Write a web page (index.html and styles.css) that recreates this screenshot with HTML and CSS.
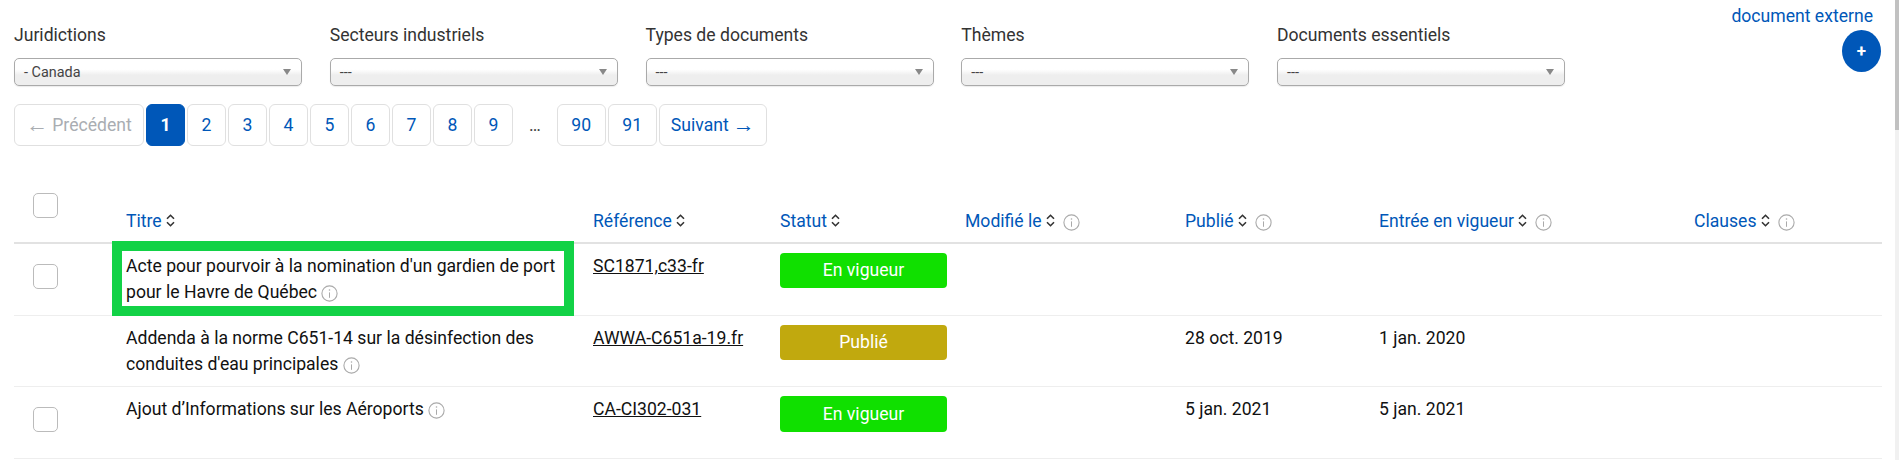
FILE: index.html
```html
<!DOCTYPE html>
<html lang="fr">
<head>
<meta charset="utf-8">
<title>Documents</title>
<link rel="stylesheet" href="styles.css">
</head>
<body>
<svg class="defs" width="0" height="0" aria-hidden="true">
  <symbol id="sort" viewBox="0 0 9 13"><path d="M1 4.8 4.5 1.3 8 4.8M1 8.2 4.5 11.7 8 8.2" fill="none" stroke="#333" stroke-width="1.6"/></symbol>
  <symbol id="info" viewBox="0 0 17 17"><circle cx="8.5" cy="8.5" r="7.6" fill="none" stroke="#aaa" stroke-width="1.1"/><path d="M8.5 7.4v5.4" stroke="#aaa" stroke-width="1"/><circle cx="8.5" cy="5" r=".8" fill="#aaa"/></symbol>
</svg>
<main class="page">
  <div class="top">
    <form class="filters">
      <div class="filter"><label class="filter-label">Juridictions</label><div class="select"><span>- Canada</span><i class="caret"></i></div></div>
      <div class="filter"><label class="filter-label">Secteurs industriels</label><div class="select"><span>---</span><i class="caret"></i></div></div>
      <div class="filter"><label class="filter-label">Types de documents</label><div class="select"><span>---</span><i class="caret"></i></div></div>
      <div class="filter"><label class="filter-label">Thèmes</label><div class="select"><span>---</span><i class="caret"></i></div></div>
      <div class="filter"><label class="filter-label">Documents essentiels</label><div class="select"><span>---</span><i class="caret"></i></div></div>
    </form>
    <div class="external">
      <a class="external-link" href="#">document externe</a>
      <a class="add" href="#">+</a>
    </div>
  </div>
  <nav class="pager">
    <span class="pg prev"><span class="arrow">←</span> Précédent</span>
    <span class="pg current">1</span>
    <a class="pg" href="#">2</a>
    <a class="pg" href="#">3</a>
    <a class="pg" href="#">4</a>
    <a class="pg" href="#">5</a>
    <a class="pg" href="#">6</a>
    <a class="pg" href="#">7</a>
    <a class="pg" href="#">8</a>
    <a class="pg" href="#">9</a>
    <span class="gap">…</span>
    <a class="pg p90" href="#">90</a>
    <a class="pg p91" href="#">91</a>
    <a class="pg next" href="#">Suivant <span class="arrow">→</span></a>
  </nav>
  <table class="docs">
    <colgroup>
      <col class="c-check"><col class="c-title"><col class="c-ref"><col class="c-status"><col class="c-mod"><col class="c-pub"><col class="c-eff"><col class="c-cl">
    </colgroup>
    <thead>
      <tr>
        <th class="check-head"><span class="box"></span></th>
        <th><a href="#">Titre</a><svg class="sort"><use href="#sort"/></svg></th>
        <th><a href="#">Référence</a><svg class="sort"><use href="#sort"/></svg></th>
        <th><a href="#">Statut</a><svg class="sort"><use href="#sort"/></svg></th>
        <th><a href="#">Modifié le</a><svg class="sort"><use href="#sort"/></svg><svg class="info head-info"><use href="#info"/></svg></th>
        <th><a href="#">Publié</a><svg class="sort"><use href="#sort"/></svg><svg class="info head-info"><use href="#info"/></svg></th>
        <th><a href="#">Entrée en vigueur</a><svg class="sort"><use href="#sort"/></svg><svg class="info head-info"><use href="#info"/></svg></th>
        <th><a href="#">Clauses</a><svg class="sort"><use href="#sort"/></svg><svg class="info head-info"><use href="#info"/></svg></th>
      </tr>
    </thead>
    <tbody>
      <tr class="r1">
        <td class="check"><span class="box"></span></td>
        <td class="title marked">Acte pour pourvoir à la nomination d'un gardien de port pour le Havre de Québec <svg class="info"><use href="#info"/></svg></td>
        <td><a class="ref" href="#">SC1871,c33-fr</a></td>
        <td><span class="badge on">En vigueur</span></td>
        <td></td><td></td><td></td><td></td>
      </tr>
      <tr class="r2">
        <td class="check"></td>
        <td class="title">Addenda à la norme C651-14 sur la désinfection des conduites d'eau principales <svg class="info"><use href="#info"/></svg></td>
        <td><a class="ref" href="#">AWWA-C651a-19.fr</a></td>
        <td><span class="badge pub">Publié</span></td>
        <td></td><td>28 oct. 2019</td><td>1 jan. 2020</td><td></td>
      </tr>
      <tr class="r3">
        <td class="check"><span class="box"></span></td>
        <td class="title">Ajout d’Informations sur les Aéroports <svg class="info"><use href="#info"/></svg></td>
        <td><a class="ref" href="#">CA-CI302-031</a></td>
        <td><span class="badge on tall">En vigueur</span></td>
        <td></td><td>5 jan. 2021</td><td>5 jan. 2021</td><td></td>
      </tr>
    </tbody>
  </table>
</main>
<div class="scrollbar"><div class="thumb"></div></div>
</body>
</html>
```

FILE: styles.css
```css
* { box-sizing: border-box; }
html, body { height: 100%; }
body {
  margin: 0;
  overflow: hidden;
  background: #fff;
  color: #212529;
  font: 17.6px/26px Roboto, "Liberation Sans", sans-serif;
  display: flex;
}
a { color: #0057b8; text-decoration: none; }
.defs { position: absolute; }
.page { flex: 1; min-width: 0; padding: 0 13px 0 14px; }
.scrollbar { width: 4px; background: #f1f1f1; }
.thumb { height: 130px; background: #c1c1c1; }

.top { display: flex; justify-content: space-between; height: 104px; }
.filters { display: flex; gap: 27.75px; padding-top: 22px; }
.filter { width: 288px; }
.filter-label { display: block; height: 36px; line-height: 26px; color: #333; }
.select {
  height: 28px;
  padding: 0 10px 0 9px;
  display: flex;
  align-items: center;
  justify-content: space-between;
  border: 1px solid #aaa;
  border-radius: 5px;
  background: linear-gradient(#fff 40%, #eee 62%, #eee);
  box-shadow: 0 1px 1px rgba(0,0,0,.08);
  font-size: 14.4px;
  line-height: 20px;
  color: #444;
}
.select span { padding-top: 2px; }
.caret {
  width: 0;
  height: 0;
  border: 4px solid transparent;
  border-top: 6px solid #888;
  border-bottom: 0;
}
.external { display: flex; flex-direction: column; align-items: flex-end; flex: none; padding-top: 3px; }
.external-link { line-height: 26px; margin-right: 9px; white-space: nowrap; }
.add {
  margin: 1px 1px 0 0;
  width: 39px;
  height: 42px;
  border-radius: 50%;
  background: #0057b8;
  color: #fff;
  font-weight: 700;
  font-size: 17px;
  line-height: 42px;
  text-align: center;
}

.pager { display: flex; align-items: stretch; height: 42px; gap: 2px; }
.pg {
  display: flex;
  align-items: center;
  justify-content: center;
  gap: 4px;
  width: 39px;
  border: 1px solid #e0e0e0;
  border-radius: 6px;
  background: #fff;
  color: #0057b8;
}
.arrow { font-family: "Liberation Sans", sans-serif; font-size: 22px; }
.prev { width: 130px; color: #a9adb2; }
.current { background: #0057b8; border-color: #0057b8; color: #fff; font-weight: 700; }
.gap { width: 40px; display: flex; align-items: center; justify-content: center; color: #444; }
.p90 { width: 48.5px; }
.p91 { width: 49.5px; }
.next { width: 107.5px; }

.docs { table-layout: fixed; width: 1868px; border-collapse: collapse; }
.c-check { width: 98px; }
.c-title { width: 467px; }
.c-ref { width: 187px; }
.c-status { width: 185px; }
.c-mod { width: 220px; }
.c-pub { width: 194px; }
.c-eff { width: 315px; }
.c-cl { width: 202px; }
th {
  height: 97px;
  padding: 0 0 8px 14px;
  vertical-align: bottom;
  text-align: left;
  font-weight: 400;
  white-space: nowrap;
  border-bottom: 2px solid #e2e2e2;
}
th.check-head { padding: 0 0 0 19px; vertical-align: top; }
.check-head .box { margin-top: 47px; }
td {
  padding: 9px 14px 0;
  vertical-align: top;
  color: #111;
  border-bottom: 1px solid #eee;
}
.r1 td { height: 72px; }
.r2 td { height: 71px; }
.r3 td { height: 72px; }
td.check { padding: 20px 0 0 19px; }
.box {
  display: block;
  width: 25px;
  height: 25px;
  border: 1px solid #bbb;
  border-radius: 5px;
  background: #fff;
}
.title { padding-right: 20px; }
.marked { position: relative; }
.marked::after {
  content: "";
  position: absolute;
  left: 0;
  right: 5px;
  top: -3px;
  bottom: -1px;
  border: 10px solid #12d246;
  pointer-events: none;
}
.ref { color: #111; text-decoration: underline; }
.badge {
  display: block;
  width: 167px;
  height: 35px;
  line-height: 35px;
  border-radius: 4px;
  text-align: center;
  color: #fff;
}
.tall { height: 36px; line-height: 36px; }
.on { background: #10e000; }
.pub { background: #c1a90e; }
.sort { width: 9px; height: 13px; margin-left: 4px; vertical-align: 0; }
.info { width: 17px; height: 17px; vertical-align: -4px; }
.head-info { margin-left: 8px; }
```
